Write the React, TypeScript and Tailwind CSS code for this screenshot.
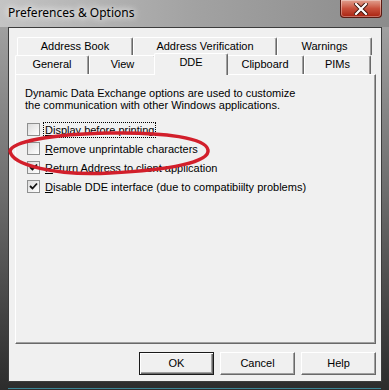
import React from "react";

const uiFont = { fontFamily: '"Liberation Sans", Arial, sans-serif' };

type TabProps = { label: string; width: number; selected?: boolean };

function Tab({ label, width, selected }: TabProps) {
  if (selected) {
    return (
      <div
        className="relative z-10 -mx-[2px] -mt-[2px] mb-[-1px] flex items-start justify-center rounded-t-[2px] border-l border-t border-r border-l-white border-t-white border-r-[#696969] bg-[#f0f0f0] pt-[2px] shadow-[inset_-1px_0_0_#a0a0a0]"
        style={{ width: width + 4 }}
      >
        {label}
      </div>
    );
  }
  return (
    <div
      className="flex items-start justify-center rounded-t-[2px] border-l border-t border-r border-l-white border-t-white border-r-[#696969] bg-[#f0f0f0] pt-[2px] shadow-[inset_-1px_0_0_#a0a0a0]"
      style={{ width }}
    >
      {label}
    </div>
  );
}

function CheckBox({ checked }: { checked?: boolean }) {
  return (
    <div className="flex h-[13px] w-[13px] shrink-0 items-center justify-center border border-[#8e8f8f] bg-gradient-to-br from-[#dcdcdc] to-white">
      {checked ? (
        <svg width="9" height="9" viewBox="0 0 9 9">
          <path d="M1 4 L3.5 6.5 L8 1.5" fill="none" stroke="#111" strokeWidth="1.8" />
        </svg>
      ) : null}
    </div>
  );
}

type OptionProps = { label: string; underline: string; rest: string; checked?: boolean; focused?: boolean };

function Option({ underline, rest, checked, focused }: OptionProps) {
  return (
    <div className="flex h-[19px] items-center">
      <div className="ml-[2px]">
        <CheckBox checked={checked} />
      </div>
      <span
        className={
          focused
            ? "ml-[3px] border border-dotted border-black px-[1px] leading-[14px]"
            : "ml-[3px] border border-transparent px-[1px] leading-[14px]"
        }
      >
        <span className="underline underline-offset-[1px]">{underline}</span>
        {rest}
      </span>
    </div>
  );
}

function Button({ label, isDefault }: { label: string; isDefault?: boolean }) {
  return (
    <div
      className={
        isDefault
          ? "flex h-[23px] w-[75px] items-center justify-center border border-[#1a1a1a] bg-[#f0f0f0] shadow-[inset_1px_1px_0_#fff,inset_-1px_-1px_0_#696969,inset_-2px_-2px_0_#a0a0a0]"
          : "flex h-[23px] w-[75px] items-center justify-center border-l border-t border-r border-b border-l-white border-t-white border-r-[#696969] border-b-[#696969] bg-[#f0f0f0] shadow-[inset_-1px_-1px_0_#a0a0a0]"
      }
    >
      {label}
    </div>
  );
}

export default function App() {
  return (
    <div className="relative h-[390px] w-[389px] overflow-hidden bg-gradient-to-b from-[#a9a9a9] via-[#6c6c6c] to-[#2c2c2c]">
      {/* title bar */}
      <div className="flex h-[27px] items-start justify-between bg-gradient-to-r from-[#c4c4c4] via-[#a2a2a2] to-[#8c8c8c]">
        <span
          className="ml-[8px] mt-[5px] text-[12px] leading-[16px] text-black [text-shadow:0_0_6px_#fff,0_0_10px_#fff]"
          style={{ fontFamily: '"Noto Sans", "Open Sans", sans-serif' }}
        >
          Preferences &amp; Options
        </span>
        <div className="mr-[7px] flex h-[18px] w-[42px] items-center justify-center rounded-b-[4px] border border-t-0 border-[#5a1a12] bg-gradient-to-b from-[#e0a090] via-[#c8503c] to-[#a8200e] shadow-[inset_0_0_0_1px_rgba(255,255,255,0.35)]">
          <svg width="14" height="12" viewBox="0 0 14 12">
            <path d="M2 1 L12 11 M12 1 L2 11" stroke="#3a1008" strokeWidth="4" strokeLinecap="square" />
            <path d="M2 1 L12 11 M12 1 L2 11" stroke="#fff" strokeWidth="2.2" strokeLinecap="square" />
          </svg>
        </div>
      </div>

      {/* client area */}
      <div
        className="ml-[8px] mr-[7px] flex h-[355px] flex-col border border-[#3c3c3c] bg-[#f0f0f0] pl-[6px] pr-[6px] pt-[9px] text-[11px] text-black"
        style={uiFont}
      >
        <div className="flex h-[18px] pl-[2px] leading-[13px]">
          <Tab label="Address Book" width={116} />
          <Tab label="Address Verification" width={144} />
          <Tab label="Warnings" width={95} />
        </div>
        <div className="flex h-[19px] leading-[13px]">
          <Tab label="General" width={74} />
          <Tab label="View" width={67} />
          <Tab label="DDE" width={70} selected />
          <Tab label="Clipboard" width={78} />
          <Tab label="PIMs" width={67} />
        </div>

        {/* tab panel */}
        <div className="h-[270px] w-[361px] border-l border-t border-r border-b border-l-white border-t-white border-r-[#696969] border-b-[#696969] pl-[9px] pt-[12px] shadow-[inset_-1px_-1px_0_#a0a0a0]">
          <p className="leading-[12px]">
            Dynamic Data Exchange options are used to customize
            <br />
            the communication with other Windows applications.
          </p>
          <div className="mt-[9px] flex flex-col">
            <Option label="" underline="D" rest="isplay before printing" focused />
            <Option label="" underline="R" rest="emove unprintable characters" />
            <Option label="" underline="R" rest="eturn Address to client application" checked />
            <Option label="" underline="D" rest="isable DDE interface (due to compatibiilty problems)" checked />
          </div>
        </div>

        <div className="mt-[8px] flex w-[361px] justify-end gap-[6px]">
          <Button label="OK" isDefault />
          <Button label="Cancel" />
          <Button label="Help" />
        </div>
      </div>
      <div className="mx-[8px] mt-[6px] h-[1px] bg-[#3a8494]" />

      {/* hand-drawn red ellipse */}
      <svg className="pointer-events-none absolute left-0 top-0" width="389" height="390">
        <path
          d="M10,151 C12,142 50,134 110,133 C165,132 206,138 208,150 C210,162 170,170 110,173 C55,176 12,165 10,151 Z"
          fill="none"
          stroke="#d21f2b"
          strokeWidth="3.5"
        />
      </svg>
    </div>
  );
}
